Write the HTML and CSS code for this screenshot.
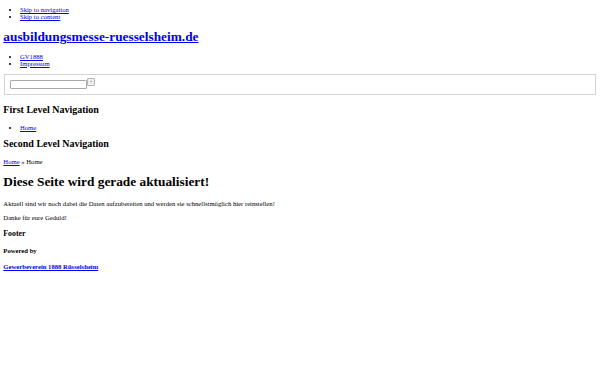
FILE: index.html
```html
<!DOCTYPE html>
<html lang="de">
<head>
    <meta charset="UTF-8">
    <meta name="viewport" content="width=device-width, initial-scale=1.0">
    <title>ausbildungsmesse-ruesselsheim.de</title>

    <link rel="stylesheet" href="styles.css">

</head>
<body>
    <ul class="skip">
        <li><a href="#nav">Skip to navigation</a></li>
        <li><a href="#content">Skip to content</a></li>
    </ul>

    <h1 class="site-title"><a href="#">ausbildungsmesse-ruesselsheim.de</a></h1>

    <ul class="meta">
        <li><a href="#">GV1888</a></li>
        <li><a href="#">Impressum</a></li>
    </ul>

    <form class="search">
        <input type="text" class="search-field">
        <button type="button" class="search-btn">»</button>
    </form>

    <h2 id="nav">First Level Navigation</h2>
    <ul class="nav">
        <li><a href="#">Home</a></li>
    </ul>

    <h2 class="sub">Second Level Navigation</h2>
    <p class="crumbs"><a href="#">Home</a> » Home</p>

    <h1 id="content" class="page-title">Diese Seite wird gerade aktualisiert!</h1>
    <p>Aktuell sind wir noch dabei die Daten aufzubereiten und werden sie schnellstmöglich hier reinstellen!</p>
    <p>Danke für eure Geduld!</p>

    <h3>Footer</h3>
    <h4>Powered by</h4>
    <p class="powered"><a href="#">Gewerbeverein 1888 Rüsselsheim</a></p>
</body>
</html>
```

FILE: styles.css
```css
body {
    margin: 3.33px;
    font-family: "Liberation Serif", serif;
    font-size: 6.67px;
    color: #000;
    background-color: #fff;
}

a {
    color: #0000ee;
}

ul {
    margin: 6.67px 0;
    padding-left: 16.67px;
}

.skip {
    margin-top: 2.8px;
}

h1 {
    font-size: 13.33px;
    margin: 9px 0;
}

.site-title {
    margin-bottom: 7.6px;
}

.page-title {
    margin-bottom: 9.5px;
}

h2 {
    font-size: 10px;
    margin: 9px 0;
}

h2.sub {
    margin-top: 6.67px;
}

.nav {
    margin-bottom: 6.67px;
}

h3 {
    font-size: 7.8px;
    margin: 7.8px 0;
}

h4 {
    font-size: 6.67px;
    margin: 8.87px 0;
}

p {
    margin: 7.5px 0;
}

.search {
    display: flex;
    align-items: flex-start;
    height: 12.5px;
    margin: 7.67px 0.83px 0;
    padding: 2.3px 5px 4.2px;
    border: 1px solid #d4d4d4;
}

.search-field {
    width: 77px;
    height: 8.5px;
    margin-top: 2.5px;
    padding: 0;
    border: 1px solid #a9a9a9;
    border-radius: 1px;
    box-sizing: border-box;
}

.search-btn {
    width: 8px;
    height: 8px;
    margin-top: 0.5px;
    padding: 0;
    border: 1px solid #b5b5b5;
    border-radius: 1px;
    background-color: #efefef;
    font-size: 3px;
    line-height: 6px;
    color: #555;
}

.powered a {
    font-weight: bold;
}
```
